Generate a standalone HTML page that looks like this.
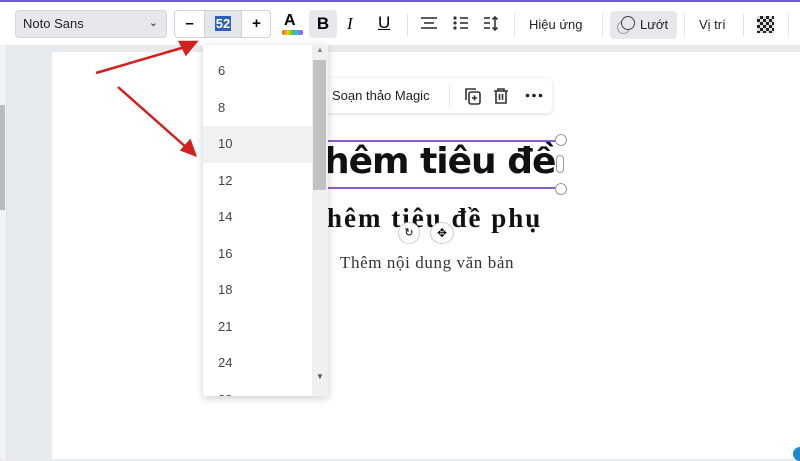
<!DOCTYPE html>
<html><head><meta charset="utf-8"><style>
*{margin:0;padding:0;box-sizing:border-box}
body{width:800px;height:459px;overflow:hidden;background:#e8ebed;font-family:"Liberation Sans","DejaVu Sans",sans-serif;position:relative}
.abs{position:absolute}
.tb{left:0;top:0;width:800px;height:45px;background:#fff;border-top:2px solid #6b5fd0}
.sep{position:absolute;top:12px;width:1px;height:22px;background:#e0e2e5}
.dd div{height:36.5px;line-height:36.5px;padding-left:15px;font-size:13px;color:#444}
</style></head><body>
<div class="abs" style="left:0;top:45px;width:7px;height:414px;background:#f3f4f2;border-right:1px solid #dde"></div>
<div class="abs" style="left:0;top:105px;width:5px;height:105px;background:#bbb"></div>
<div class="abs" style="left:52px;top:52px;width:748px;height:407px;background:#fff"></div>
<div class="abs tb">
 <div class="abs" style="left:15px;top:8px;width:152px;height:28px;background:#e6e8eb;border:1px solid #d4d6d9;border-radius:4px;font-size:13px;line-height:26px;padding-left:7px;color:#222">Noto Sans<span style="position:absolute;right:8px;top:-1px;font-size:11px">&#8964;</span></div>
 <div class="abs" style="left:174px;top:8px;width:97px;height:28px;border:1px solid #cfd2d6;border-radius:4px;background:#fff">
  <div class="abs" style="left:0;top:0;width:29px;height:26px;text-align:center;line-height:26px;font-size:15px;font-weight:bold">–</div>
  <div class="abs" style="left:29px;top:0;width:38px;height:26px;background:#e3e6ea;border-left:1px solid #cfd2d6;border-right:1px solid #cfd2d6;text-align:center;line-height:26px"><span style="background:#2f5fb8;color:#fff;font-size:13px;font-weight:bold;padding:0 1px">52</span></div>
  <div class="abs" style="left:67px;top:0;width:29px;height:26px;text-align:center;line-height:26px;font-size:15px;font-weight:bold">+</div>
 </div>
 <div class="abs" style="left:284px;top:10px;font-size:16px;font-weight:bold">A</div>
 <div class="abs" style="left:282px;top:28px;width:21px;height:5px;border-radius:2px;background:linear-gradient(90deg,#f44,#fc0,#4c4,#4af,#a4f)"></div>
 <div class="abs" style="left:309px;top:8px;width:28px;height:28px;background:#e6e8eb;border-radius:4px;text-align:center;line-height:28px;font-size:17px;font-weight:bold">B</div>
 <div class="abs" style="left:347px;top:12px;font-size:17px;font-style:italic;font-family:'Liberation Serif',serif">I</div>
 <div class="abs" style="left:378px;top:11px;font-size:17px;text-decoration:underline">U</div>
 <div class="sep" style="left:407px"></div>
 <svg class="abs" style="left:420px;top:14px" width="80" height="16" stroke="#333" stroke-width="1.6" fill="#333">
  <line x1="1" y1="2" x2="17" y2="2"/><line x1="4" y1="7" x2="14" y2="7"/><line x1="1" y1="12" x2="17" y2="12"/>
  <circle cx="35" cy="2" r="1.6" stroke="none"/><circle cx="35" cy="7" r="1.6" stroke="none"/><circle cx="35" cy="12" r="1.6" stroke="none"/>
  <line x1="40" y1="2" x2="48" y2="2"/><line x1="40" y1="7" x2="48" y2="7"/><line x1="40" y1="12" x2="48" y2="12"/>
  <line x1="64" y1="2" x2="70" y2="2"/><line x1="64" y1="7" x2="70" y2="7"/><line x1="64" y1="12" x2="70" y2="12"/>
  <line x1="75" y1="1" x2="75" y2="14"/><polyline points="72.5,3.5 75,1 77.5,3.5" fill="none"/><polyline points="72.5,11.5 75,14 77.5,11.5" fill="none"/>
 </svg>
 <div class="sep" style="left:514px"></div>
 <div class="abs" style="left:529px;top:15px;font-size:13px;color:#222">Hiệu ứng</div>
 <div class="sep" style="left:602px"></div>
 <div class="abs" style="left:610px;top:9px;width:67px;height:28px;background:#e6e8eb;border-radius:4px"></div>
 <div class="abs" style="left:617px;top:19px;width:13px;height:13px;border:1.5px solid #999;border-radius:50%"></div>
 <div class="abs" style="left:621px;top:14px;width:14px;height:14px;border:1.5px solid #444;border-radius:50%;background:#e6e8eb"></div>
 <div class="abs" style="left:640px;top:15px;font-size:13px;color:#222">Lướt</div>
 <div class="sep" style="left:684px"></div>
 <div class="abs" style="left:699px;top:15px;font-size:13px;color:#222">Vị trí</div>
 <div class="sep" style="left:743px"></div>
 <div class="abs" style="left:757px;top:14px;width:17px;height:17px;background:repeating-conic-gradient(#222 0 25%,#ddd 0 50%) 0 0/6px 6px"></div>
 <div class="sep" style="left:788px"></div>
</div>
<div class="abs" style="left:319px;top:78px;width:233px;height:35px;background:#fff;border-radius:5px;box-shadow:0 1px 4px rgba(0,0,0,.15)">
 <div class="abs" style="left:13px;top:10px;font-size:13px;color:#222">Soạn thảo Magic</div>
 <div class="abs" style="left:130px;top:7px;width:1px;height:22px;background:#e0e2e5"></div>
 <svg class="abs" style="left:144px;top:8px" width="80" height="20" stroke="#333" stroke-width="1.6" fill="none">
  <path d="M3 14V3h10"/><rect x="6" y="6" width="11" height="12" rx="2"/><path d="M11.5 9.5v5M9 12h5"/>
  <path d="M31 5h14M35 5V3h6v2M33 5v12h10V5M36.5 8v6M39.5 8v6"/>
 </svg>
 <svg class="abs" style="left:206px;top:15px" width="18" height="5" fill="#222"><circle cx="2.5" cy="2.5" r="1.8"/><circle cx="9" cy="2.5" r="1.8"/><circle cx="15.5" cy="2.5" r="1.8"/></svg>
</div>
<div class="abs" style="left:318px;top:140px;width:242px;height:49px;border:2px solid #8b5cd6;border-right:none"></div>
<div class="abs" style="left:555px;top:134px;width:12px;height:12px;border:1px solid #999;border-radius:50%;background:#fff"></div>
<div class="abs" style="left:555px;top:183px;width:12px;height:12px;border:1px solid #999;border-radius:50%;background:#fff"></div>
<div class="abs" style="left:556px;top:155px;width:8px;height:18px;border:1px solid #999;border-radius:4px;background:#fff"></div>
<div class="abs" style="left:324px;top:141px;font-size:36px;font-weight:bold;font-family:'DejaVu Sans',sans-serif;letter-spacing:-1px;color:#111">hêm tiêu đề</div>
<div class="abs" style="left:327px;top:203px;font-size:27px;font-weight:bold;font-family:'Liberation Serif',serif;color:#111;letter-spacing:2px">hêm tiêu đề phụ</div>
<div class="abs" style="left:398px;top:222px;width:22px;height:22px;border:1px solid #ccc;border-radius:50%;background:#fff;font-size:11px;text-align:center;line-height:20px">&#8635;</div>
<div class="abs" style="left:430px;top:222px;width:24px;height:22px;border:1px solid #ccc;border-radius:50%;background:#fff;font-size:12px;text-align:center;line-height:20px">&#10021;</div>
<div class="abs" style="left:340px;top:253px;font-size:17px;font-family:'Liberation Serif',serif;color:#333;letter-spacing:0.6px">Thêm nội dung văn bản</div>
<div class="abs dd" style="left:203px;top:45px;width:125px;height:351px;background:#fff;box-shadow:0 2px 8px rgba(0,0,0,.2);overflow:hidden;padding-top:8px">
 <div>6</div><div>8</div><div style="background:#f0f1f3">10</div><div>12</div><div>14</div><div>16</div><div>18</div><div>21</div><div>24</div><div>28</div>
 <div class="abs" style="left:109px;top:0;width:16px;height:351px;background:#f0f0f0;padding:0"></div>
 <div class="abs" style="left:110px;top:15px;width:13px;height:130px;background:#c1c1c1;padding:0"></div>
 <div class="abs" style="left:113px;top:-13px;font-size:8px;color:#888;padding:0">▲</div>
 <div class="abs" style="left:113px;top:322px;font-size:8px;color:#555;padding:0;height:20px;line-height:20px">▼</div>
</div>
<svg class="abs" style="left:0;top:0" width="800" height="459"><g stroke="#d32020" stroke-width="2.5" fill="#d32020"><line x1="96" y1="73" x2="185" y2="47"/><polygon points="196,42 180,42 186,54"/><line x1="118" y1="87" x2="187" y2="148"/><polygon points="195,155 182,150 190,141"/></g></svg>
<div class="abs" style="left:793px;top:447px;width:14px;height:14px;border-radius:50%;background:#1e88c9"></div>
</body></html>
